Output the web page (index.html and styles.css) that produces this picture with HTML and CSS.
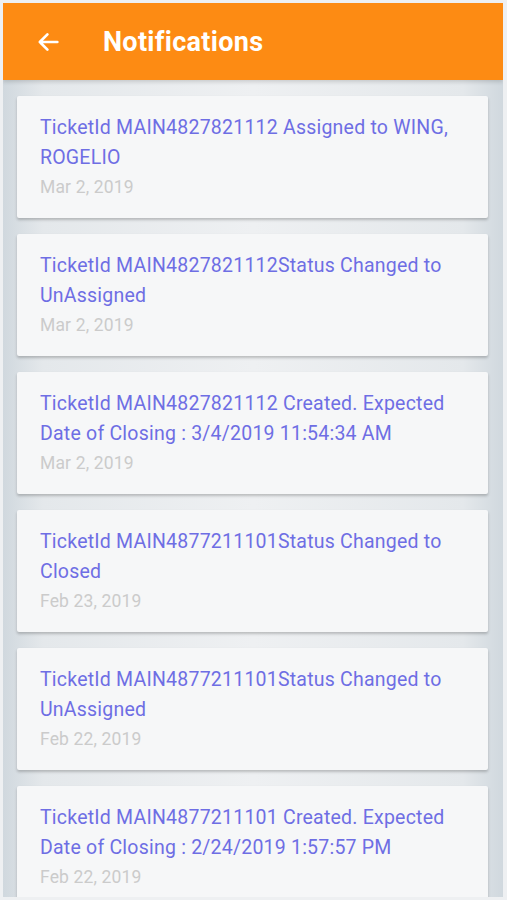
FILE: index.html
```html
<!DOCTYPE html>
<html lang="en">
<head>
    <meta charset="UTF-8">
    <meta name="viewport" content="width=device-width, initial-scale=1.0">
    <title>Notifications</title>
    <link rel="stylesheet" href="styles.css">
</head>
<body>
    <div class="app">
        <div class="header">
            <button class="back" aria-label="Back">
                <svg width="28" height="28" viewBox="0 0 24 24">
                    <path d="M20 12H5M11.5 5.5L5 12l6.5 6.5" fill="none" stroke="#fff" stroke-width="2.3" stroke-linecap="round" stroke-linejoin="round"/>
                </svg>
            </button>
            <h1>Notifications</h1>
        </div>

        <div class="list">
            <div class="card">
                <div class="message">TicketId MAIN4827821112 Assigned to WING, ROGELIO</div>
                <div class="date">Mar 2, 2019</div>
            </div>
            <div class="card">
                <div class="message">TicketId MAIN4827821112Status Changed to UnAssigned</div>
                <div class="date">Mar 2, 2019</div>
            </div>
            <div class="card">
                <div class="message">TicketId MAIN4827821112 Created. Expected Date of Closing : 3/4/2019 11:54:34 AM</div>
                <div class="date">Mar 2, 2019</div>
            </div>
            <div class="card">
                <div class="message">TicketId MAIN4877211101Status Changed to Closed</div>
                <div class="date">Feb 23, 2019</div>
            </div>
            <div class="card">
                <div class="message">TicketId MAIN4877211101Status Changed to UnAssigned</div>
                <div class="date">Feb 22, 2019</div>
            </div>
            <div class="card">
                <div class="message">TicketId MAIN4877211101 Created. Expected Date of Closing : 2/24/2019 1:57:57 PM</div>
                <div class="date">Feb 22, 2019</div>
            </div>
        </div>
    </div>
</body>
</html>
```

FILE: styles.css
```css
body {
    margin: 0;
    background-color: #eef0f2;
    font-family: Roboto, "Liberation Sans", sans-serif;
}
.app {
    margin: 3px 4px 0 3px;
    height: 894px;
    overflow: hidden;
    background: linear-gradient(90deg, #d0d8de 0%, #e4e8eb 8%, #eef0f2 50%, #e4e8eb 92%, #d0d8de 100%);
}
.header {
    height: 77px;
    background-color: #fd8b13;
    display: flex;
    align-items: center;
    padding-left: 31px;
    box-shadow: 0 2px 4px rgba(0,0,0,0.15);
}
.back {
    background: none;
    border: none;
    padding: 0;
    width: 28px;
    height: 28px;
    display: flex;
    align-items: center;
    justify-content: center;
    cursor: pointer;
}
.header h1 {
    margin: 0 0 0 41px;
    color: #fff;
    font-size: 27px;
    font-weight: bold;
    letter-spacing: 0.3px;
}
.list {
    display: flex;
    flex-direction: column;
    gap: 16px;
    padding: 16px 15px 0 14px;
}
.card {
    flex-shrink: 0;
    height: 122px;
    box-sizing: border-box;
    padding: 17px 18px 17px 23px;
    background-color: #f6f7f8;
    border-radius: 2px;
    box-shadow: 0 2px 3px rgba(0,0,0,0.22);
}
.message {
    color: #6e6ee4;
    font-size: 19.5px;
    line-height: 30px;
    letter-spacing: 0.22px;
}
.date {
    color: #cbcbcb;
    font-size: 17.5px;
    line-height: 28px;
    letter-spacing: 0.15px;
}
```
